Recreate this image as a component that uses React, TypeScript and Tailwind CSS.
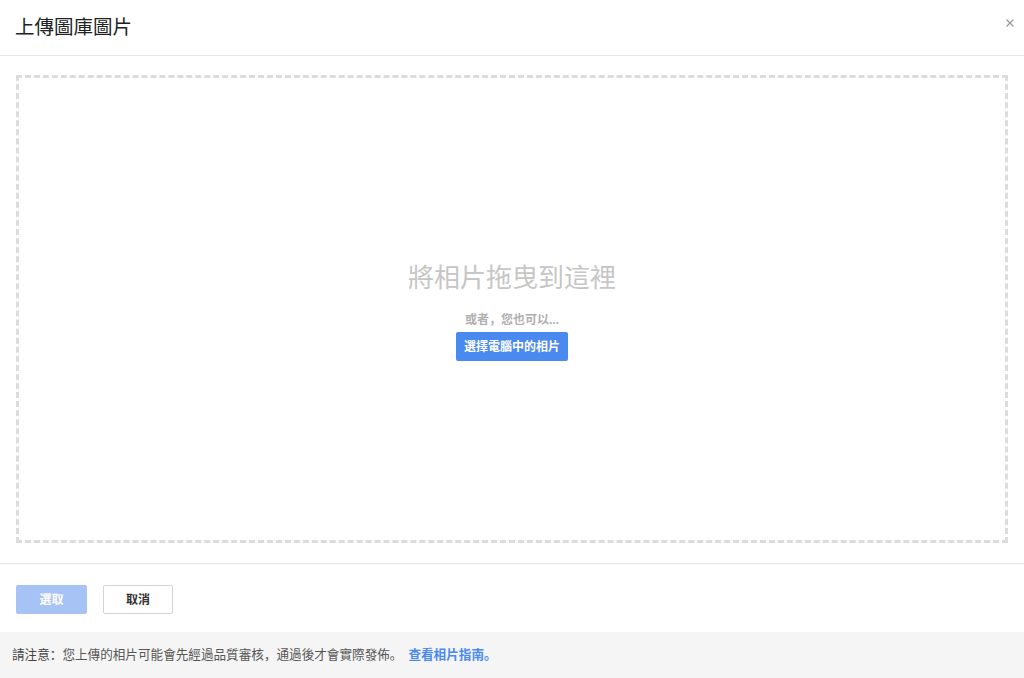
import { X } from 'lucide-react';

export default function App() {
  return (
    <div
      className="w-[1024px] h-[678px] flex flex-col bg-white text-[#222]"
      style={{ fontFamily: '"Liberation Sans", "Noto Sans CJK SC", sans-serif' }}
    >
      {/* Header */}
      <div className="h-[56px] shrink-0 flex items-center justify-between pl-[15px] pr-[4px] border-b border-[#e5e5e5]">
        <h1 className="text-[19.5px] leading-none text-[#222]">上傳圖庫圖片</h1>
        <button className="w-5 h-5 flex items-center justify-center text-[#999] -mt-[9px]">
          <X className="w-[12px] h-[12px]" strokeWidth={2.5} />
        </button>
      </div>

      {/* Drop zone */}
      <div className="flex-1 px-4 pt-[19px] pb-[20px] border-b border-[#e5e5e5]">
        <div className="h-full border-[3px] border-dashed border-[#dcdcdc] flex flex-col items-center justify-center pt-[4px]">
          <p className="text-[26px] leading-[34px] text-[#c6c6c6]">將相片拖曳到這裡</p>
          <p className="mt-[17px] text-[12px] leading-[16px] font-bold text-[#b0b0b0]">或者，您也可以...</p>
          <button className="mt-[4px] h-[29px] px-2 rounded-[2px] bg-[#4a89f0] text-white text-[12px] font-bold">
            選擇電腦中的相片
          </button>
        </div>
      </div>

      {/* Actions */}
      <div className="h-[68px] shrink-0 flex items-start gap-4 px-4 pt-[21px]">
        <button className="w-[71px] h-[29px] rounded-[2px] bg-[#a7c3f5] text-white text-[12px] font-bold">
          選取
        </button>
        <button className="w-[70px] h-[29px] rounded-[2px] bg-white border border-[#d4d4d4] text-[#333] text-[12px] font-bold">
          取消
        </button>
      </div>

      {/* Notice */}
      <div className="h-[46px] shrink-0 flex items-center px-3 bg-[#f5f5f5] text-[12.6px] text-[#555]">
        <span className="text-[#444]">請注意：</span>
        <span>您上傳的相片可能會先經過品質審核，通過後才會實際發佈。</span>
        <a className="ml-[6px] font-bold text-[#4a89f0]">查看相片指南。</a>
      </div>
    </div>
  );
}
